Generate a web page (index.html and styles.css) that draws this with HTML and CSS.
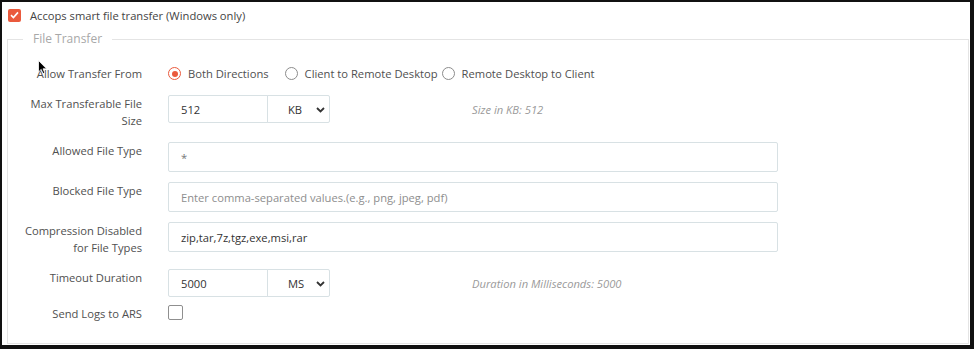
FILE: index.html
```html
<!DOCTYPE html>
<html lang="en">
<head>
  <meta charset="UTF-8" />
  <title>File Transfer Settings</title>
  <link rel="stylesheet" href="styles.css">
</head>
<body>
  <div class="frame">
    <label class="main-check">
      <span class="check on">
        <svg width="9" height="8" viewBox="0 0 9 8"><path d="M1 4.2 L3.4 6.5 L8 1.4" fill="none" stroke="#fff" stroke-width="1.6"/></svg>
      </span>
      Accops smart file transfer (Windows only)
    </label>

    <fieldset class="group">
      <legend>File Transfer</legend>
      <div class="rows">
        <div class="row row-radio">
          <div class="lbl">Allow Transfer From</div>
          <div class="field radios">
            <label class="radio-opt"><span class="radio on"></span>Both Directions</label>
            <label class="radio-opt"><span class="radio"></span>Client to Remote Desktop</label>
            <label class="radio-opt"><span class="radio"></span>Remote Desktop to Client</label>
          </div>
        </div>

        <div class="row row-tall">
          <div class="lbl">Max Transferable File Size</div>
          <div class="field">
            <div class="input-group">
              <input class="input short" value="512">
              <div class="select">KB
                <svg class="chev" width="9" height="6" viewBox="0 0 9 6"><path d="M1 1 L4.5 4.5 L8 1" fill="none" stroke="#333" stroke-width="1.8"/></svg>
              </div>
            </div>
            <span class="hint">Size in KB: 512</span>
          </div>
        </div>

        <div class="row">
          <div class="lbl">Allowed File Type</div>
          <div class="field"><input class="input wide dim" value="*"></div>
        </div>

        <div class="row">
          <div class="lbl">Blocked File Type</div>
          <div class="field"><input class="input wide" placeholder="Enter comma-separated values.(e.g., png, jpeg, pdf)"></div>
        </div>

        <div class="row row-tall">
          <div class="lbl">Compression Disabled for File Types</div>
          <div class="field"><input class="input wide" value="zip,tar,7z,tgz,exe,msi,rar"></div>
        </div>

        <div class="row">
          <div class="lbl">Timeout Duration</div>
          <div class="field">
            <div class="input-group">
              <input class="input short" value="5000">
              <div class="select">MS
                <svg class="chev" width="9" height="6" viewBox="0 0 9 6"><path d="M1 1 L4.5 4.5 L8 1" fill="none" stroke="#333" stroke-width="1.8"/></svg>
              </div>
            </div>
            <span class="hint">Duration in Milliseconds: 5000</span>
          </div>
        </div>

        <div class="row row-last">
          <div class="lbl">Send Logs to ARS</div>
          <div class="field"><span class="box"></span></div>
        </div>
      </div>
    </fieldset>

    <svg class="cursor" width="10" height="15" viewBox="0 0 10 15"><path d="M0.5 0.5 L0.5 12 L3.2 9.4 L5 13.6 L6.8 12.8 L5 8.8 L8.6 8.8 Z" fill="#000" stroke="#fff" stroke-width="0.8"/></svg>
  </div>
</body>
</html>
```

FILE: styles.css
```css
* { margin: 0; padding: 0; box-sizing: border-box; }
body {
  font-family: 'Open Sans', sans-serif;
  font-size: 11.2px;
  color: #555;
  background: #fff;
}
.frame {
  position: relative;
  width: 974px;
  height: 349px;
  border: solid #111;
  border-width: 2px 4px 4px 2px;
  display: flex;
  flex-direction: column;
}
.main-check {
  display: flex;
  align-items: center;
  gap: 9px;
  height: 26px;
  padding-left: 6px;
  color: #444;
}
.check {
  width: 13px; height: 13px;
  border-radius: 2px;
  display: flex; align-items: center; justify-content: center;
}
.check.on { background: #ea5a3d; }

/* Fieldset */
.group {
  flex: 1;
  margin: 3px 1px 1px 5px;
  border: 1px solid #e4e4e4;
  padding: 17px 0 0 0;
  min-width: 0;
}
.group legend {
  margin-left: 15px;
  padding: 0 10px;
  color: #a8a8a8;
  font-size: 12px;
  line-height: 16px;
}
.rows { display: flex; flex-direction: column; gap: 10px; }
.row { display: flex; align-items: flex-start; }
.row-radio { height: 21px; padding-top: 1px; }
.row-tall { min-height: 37px; }
.row-last { margin-top: -2px; }
.lbl {
  width: 124px;
  margin: 0 26px 0 10px;
  text-align: right;
  line-height: 17px;
  color: #505050;
}
.field { display: flex; align-items: center; }

/* Radios */
.radios { height: 17px; }
.radio-opt { display: flex; align-items: center; gap: 7px; margin-right: 4px; color: #505050; }
.radio-opt:first-child { margin-right: 16px; }
.radio {
  width: 13px; height: 13px;
  border: 1px solid #8c8c8c;
  border-radius: 50%;
  display: flex; align-items: center; justify-content: center;
}
.radio.on { border: 1.5px solid #ea5a3d; }
.radio.on::after {
  content: '';
  width: 6px; height: 6px;
  border-radius: 50%;
  background: #ea5a3d;
}

/* Inputs */
.input {
  height: 30px;
  border: 1px solid #d8e1e4;
  border-radius: 2px;
  padding: 0 12px;
  font-family: 'Open Sans', sans-serif;
  font-size: 11.2px;
  color: #333;
  background: #fff;
  outline: none;
}
.input::placeholder { color: #8e8e8e; }
.input.wide { width: 610px; }
.input.short { width: 100px; height: 28px; border-radius: 2px 0 0 2px; }
.input.dim { color: #777; }
.input-group { display: flex; }
.select {
  position: relative;
  width: 63px; height: 28px;
  margin-left: -1px;
  border: 1px solid #d8e1e4;
  border-radius: 0 2px 2px 0;
  padding-left: 20px;
  display: flex; align-items: center;
  color: #333;
}
.chev { position: absolute; right: 4px; top: 11px; }
.hint {
  margin-left: 142px;
  font-style: italic;
  color: #9a9a9a;
}
.box {
  width: 15px; height: 15px;
  border: 1px solid #8f8f8f;
  border-radius: 2px;
}

.cursor { position: absolute; left: 36px; top: 58px; }
```
